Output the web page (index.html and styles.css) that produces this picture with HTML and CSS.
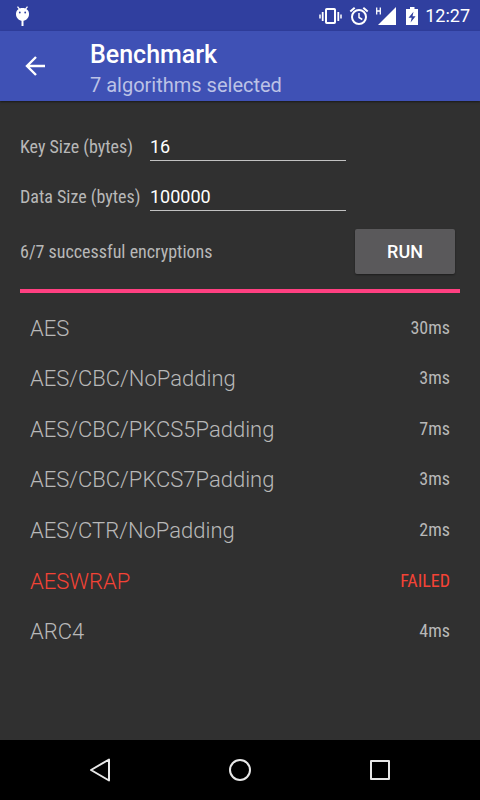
FILE: index.html
```html
<!DOCTYPE html>
<html lang="en">
<head>
<meta charset="utf-8">
<meta name="viewport" content="width=device-width, initial-scale=1">
<title>Benchmark</title>
<link rel="stylesheet" href="styles.css">
</head>
<body>
<div class="status-bar">
  <svg class="debug-icon" width="16" height="22" viewBox="0 0 16 22" aria-hidden="true">
    <path d="M2.500 1.700 4.500 4.200M12.500 1.700 10.500 4.200" stroke="#fff" stroke-width="1.300"/>
    <path d="M7.500 2.900C11.500 2.900 14 5.200 14 9S11.200 15.800 7.500 15.800 1 12.800 1 9 3.500 2.900 7.500 2.900Z" fill="#fff"/>
    <path d="M7.500 15v6" stroke="#fff" stroke-width="2"/>
    <circle cx="4.800" cy="7.500" r=".9" fill="#303f9f"/><circle cx="10.200" cy="7.500" r=".9" fill="#303f9f"/>
  </svg>
  <div class="status-icons">
    <svg width="24" height="20" viewBox="0 0 24 20" fill="none" stroke="#fff" aria-hidden="true">
      <rect x="7" y="3" width="9" height="14" rx=".8" stroke-width="2"/>
      <path d="M3.700 6v9M19.300 6v9" stroke-width="1.800"/>
      <path d="M1 8.500v4M22 8.500v4" stroke-width="1.500"/>
    </svg>
    <svg width="20" height="20" viewBox="0 0 20 20" fill="none" stroke="#fff" aria-hidden="true">
      <circle cx="10" cy="11" r="7" stroke-width="2"/>
      <path d="M1.300 5.600 5.700 1.800M18.700 5.600 14.300 1.800" stroke-width="2"/>
      <path d="M10 7v4.500l3.300 2" stroke-width="1.500"/>
    </svg>
    <svg width="22" height="20" viewBox="0 0 22 20" aria-hidden="true">
      <path d="M21 1v18H3Z" fill="#fff"/>
      <path d="M1.700 1.500v7M5.300 1.500v7M1.700 5h3.600" fill="none" stroke="#fff" stroke-width="1.300"/>
    </svg>
    <svg width="16" height="20" viewBox="-2 0 16 20" aria-hidden="true">
      <path d="M5 1h4.500v2H13v16H1V3h4Z" fill="#fff"/>
      <path d="M8.500 5.800 3.500 11.800h3.200L5.600 16.500l5-6.200H7.500Z" fill="#303f9f"/>
    </svg>
    <time class="clock">12:27</time>
  </div>
</div>
<header class="app-bar">
  <button class="back" type="button" aria-label="Navigate up">
    <svg width="20" height="20" viewBox="0 0 20 20" fill="none" stroke="#fff" stroke-width="2.400" aria-hidden="true">
      <path d="M20 10H2M11 1 2 10l9 9"/>
    </svg>
  </button>
  <div class="titles">
    <h1 class="title">Benchmark</h1>
    <p class="subtitle">7 algorithms selected</p>
  </div>
</header>
<main class="content">
  <form class="settings">
    <div class="field">
      <label for="key-size">Key Size (bytes)</label>
      <input id="key-size" type="text" inputmode="numeric" value="16">
    </div>
    <div class="field">
      <label for="data-size">Data Size (bytes)</label>
      <input id="data-size" type="text" inputmode="numeric" value="100000">
    </div>
    <div class="run-row">
      <output>6/7 successful encryptions</output>
      <button class="run" type="button">RUN</button>
    </div>
  </form>
  <div class="progress"></div>
  <table class="results">
    <tbody>
      <tr><th scope="row">AES</th><td>30ms</td></tr>
      <tr><th scope="row">AES/CBC/NoPadding</th><td>3ms</td></tr>
      <tr><th scope="row">AES/CBC/PKCS5Padding</th><td>7ms</td></tr>
      <tr><th scope="row">AES/CBC/PKCS7Padding</th><td>3ms</td></tr>
      <tr><th scope="row">AES/CTR/NoPadding</th><td>2ms</td></tr>
      <tr class="failed"><th scope="row">AESWRAP</th><td>FAILED</td></tr>
      <tr><th scope="row">ARC4</th><td>4ms</td></tr>
    </tbody>
  </table>
</main>
<nav class="nav-bar">
  <button type="button" aria-label="Back">
    <svg width="24" height="24" viewBox="0 0 24 24" fill="none" stroke="#e8e8e8" stroke-width="2" stroke-linejoin="round" aria-hidden="true"><path d="M21 1.500v21L3 12Z"/></svg>
  </button>
  <button type="button" aria-label="Home">
    <svg width="24" height="24" viewBox="0 0 24 24" fill="none" stroke="#e8e8e8" stroke-width="2" aria-hidden="true"><circle cx="12" cy="12" r="10"/></svg>
  </button>
  <button type="button" aria-label="Recent apps">
    <svg width="24" height="24" viewBox="0 0 24 24" fill="none" stroke="#e8e8e8" stroke-width="2" stroke-linejoin="round" aria-hidden="true"><path d="M3 3h18v18H3Z"/></svg>
  </button>
</nav>
</body>
</html>
```
FILE: styles.css
```css
* {
  box-sizing: border-box;
}

body {
  display: flex;
  flex-direction: column;
  min-height: 100vh;
  margin: 0;
  background: #303030;
  color: #b8b8b8;
  font-family: Roboto, "Liberation Sans", sans-serif;
}

button {
  padding: 0;
  border: 0;
  background: none;
  color: #fff;
  font-family: Roboto, "Liberation Sans", sans-serif;
}

svg {
  display: block;
}

.status-bar {
  display: flex;
  align-items: center;
  justify-content: space-between;
  height: 31px;
  padding: 0 10px 0 15px;
  background: #303f9f;
}

.status-icons {
  display: flex;
  align-items: center;
  gap: 6px;
}

.clock {
  color: #fff;
  font-size: 18px;
  line-height: 24px;
}

.app-bar {
  display: flex;
  align-items: center;
  height: 70px;
  padding-left: 15px;
  background: #3f51b5;
  box-shadow: 0 1px 2px rgba(0, 0, 0, 0.5);
}

.back {
  display: flex;
  align-items: center;
  justify-content: center;
  width: 40px;
  height: 40px;
  margin-right: 35px;
}

.titles {
  padding-top: 8px;
}

.title {
  margin: 0;
  color: #fff;
  font-size: 25px;
  font-weight: 500;
  line-height: 30px;
}

.subtitle {
  margin: 0;
  color: #bcc2e6;
  font-size: 20px;
  line-height: 30px;
}

.content {
  flex: 1;
  padding: 20px 20px 0;
}

.field,
.run-row {
  display: flex;
  align-items: center;
  font-family: "Roboto Condensed", Roboto, "Liberation Sans", sans-serif;
  font-size: 18px;
}

.field {
  height: 50px;
}

.field label {
  width: 130px;
}

.field input {
  width: 196px;
  height: 30px;
  padding: 2px 0 0;
  border: 0;
  border-bottom: 1px solid #c1c1c1;
  border-radius: 0;
  background: none;
  color: #fff;
  font-family: Roboto, "Liberation Sans", sans-serif;
  font-size: 18px;
}

.run-row {
  justify-content: space-between;
  height: 60px;
  padding-right: 5px;
}

.run {
  width: 100px;
  height: 45px;
  border-radius: 2px;
  background: #5a595b;
  box-shadow: 0 1px 2px rgba(0, 0, 0, 0.4);
  font-size: 18px;
  font-weight: 500;
}

.progress {
  height: 4px;
  margin: 8px 0 10px;
  background: #ff4081;
}

.results {
  width: 100%;
  height: 354px;
  border-collapse: collapse;
}

.results th,
.results td {
  padding: 0 10px;
}

.results th {
  font-size: 22px;
  font-weight: 300;
  text-align: left;
}

.results td {
  padding-bottom: 2px;
  font-family: "Roboto Condensed", Roboto, "Liberation Sans", sans-serif;
  font-size: 18px;
  text-align: right;
}

.failed {
  color: #f44336;
}

.nav-bar {
  display: flex;
  justify-content: center;
  height: 60px;
  background: #000;
}

.nav-bar button {
  display: flex;
  align-items: center;
  justify-content: center;
  width: 140px;
}
```
